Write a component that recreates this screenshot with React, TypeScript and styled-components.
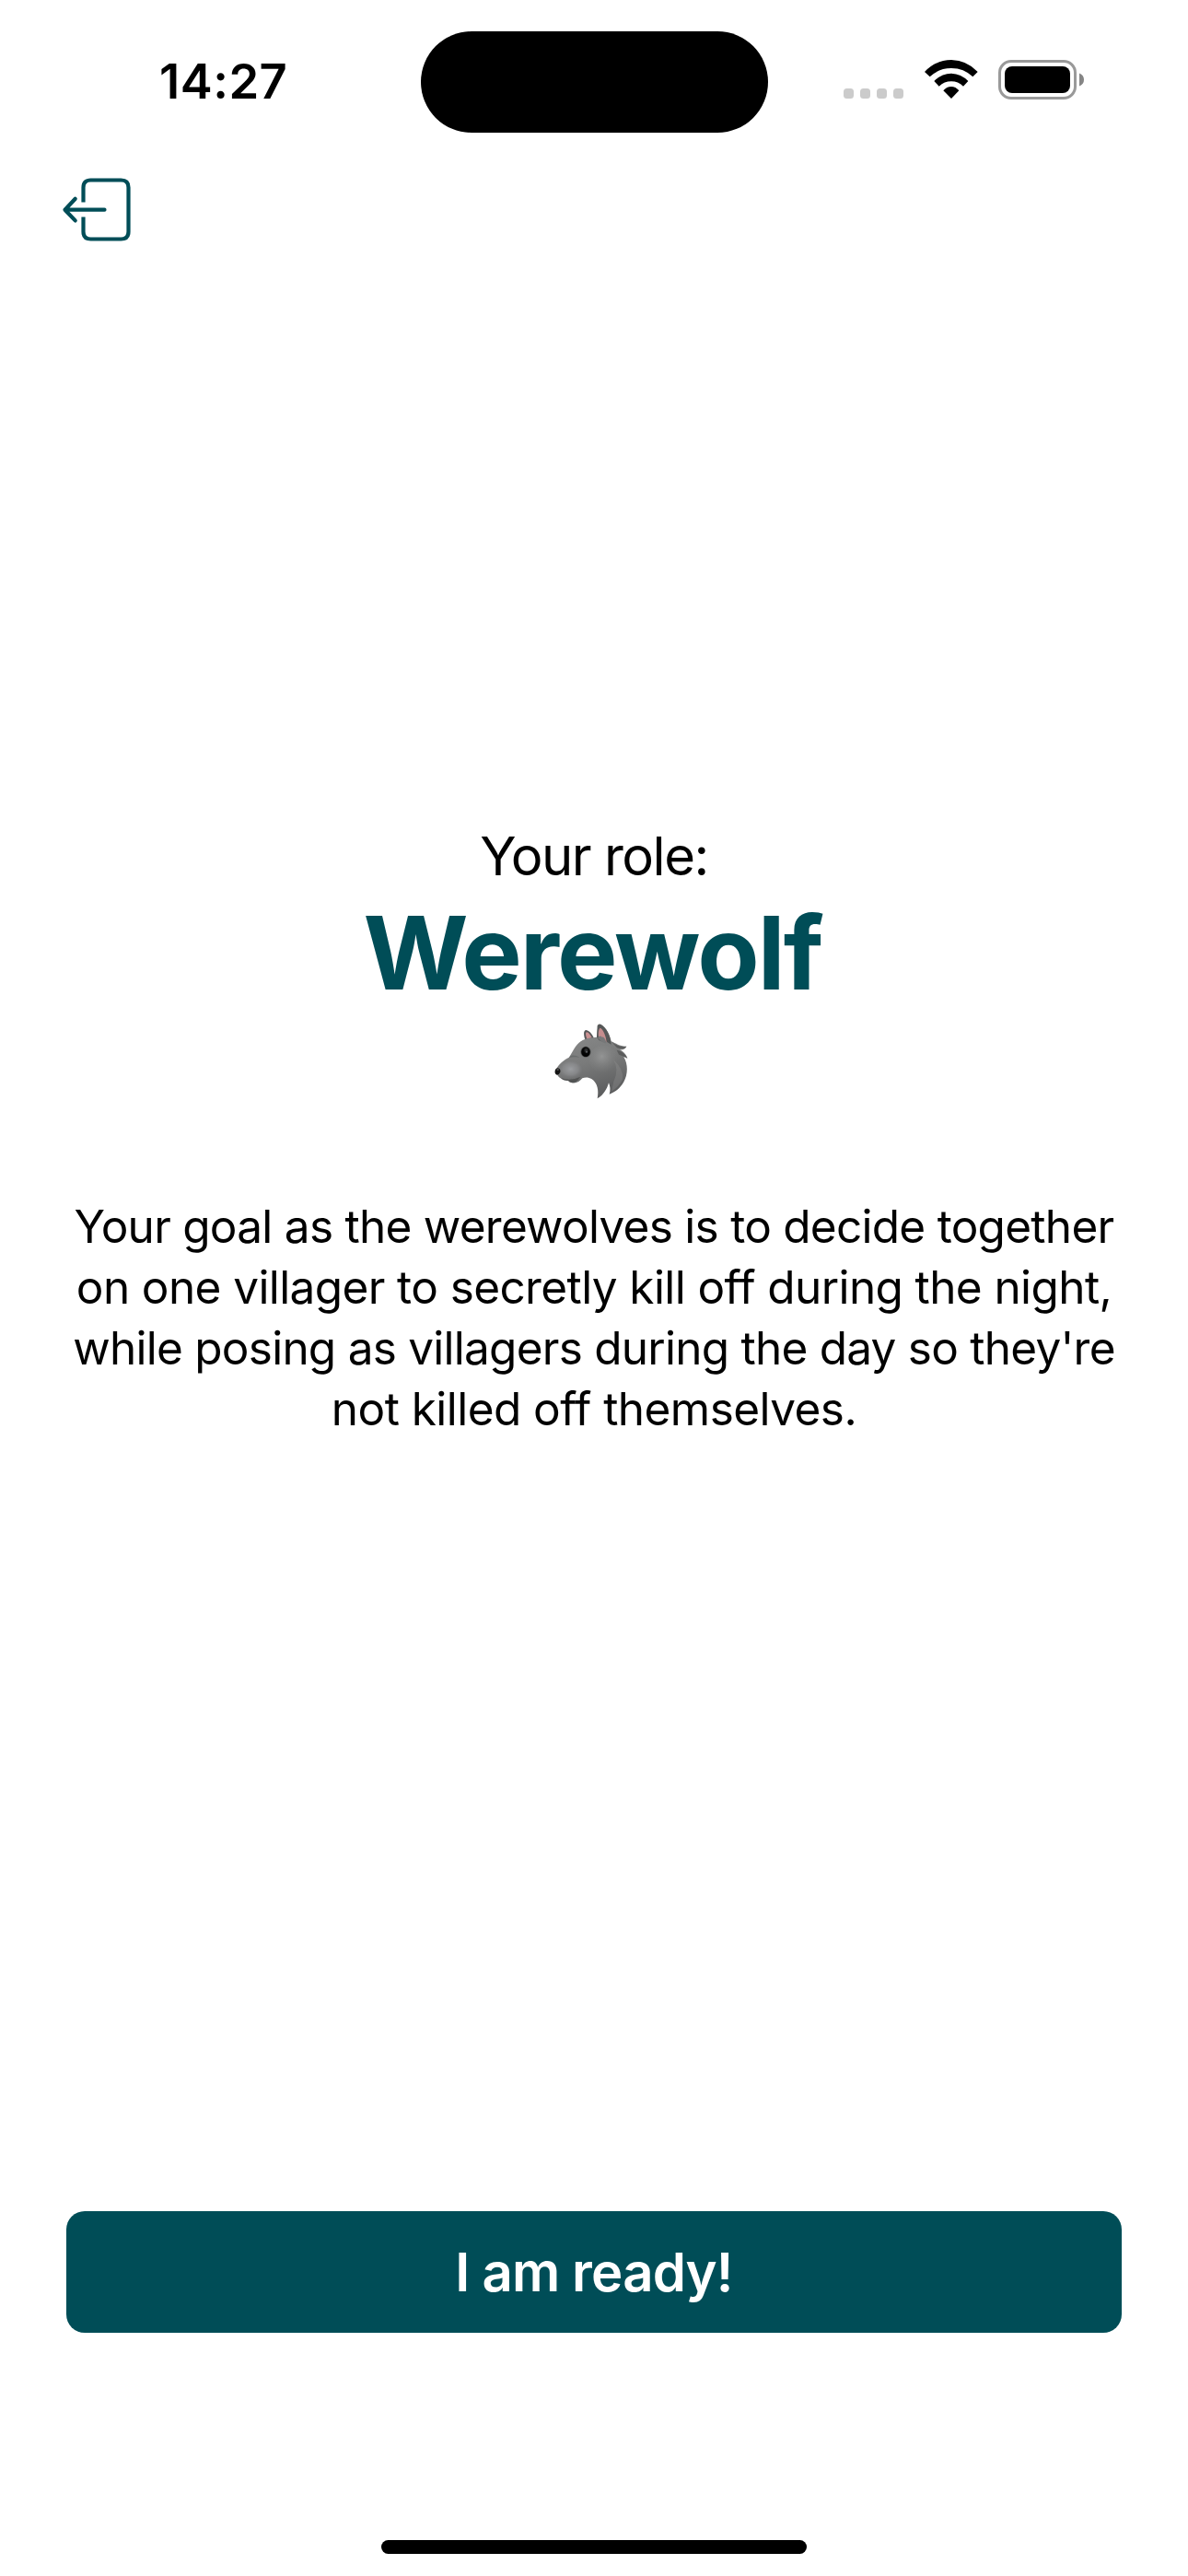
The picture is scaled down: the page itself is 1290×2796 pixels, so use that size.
import React from "react";
import styled, { createGlobalStyle } from "styled-components";

const TEAL = "#004d57";

const GlobalStyle = createGlobalStyle`
  * { box-sizing: border-box; }
  body {
    margin: 0;
    background: #fff;
    color: #000;
    font-family: Inter, "Liberation Sans", sans-serif;
  }
`;

const Screen = styled.div`
  width: 1290px;
  height: 2796px;
  display: flex;
  flex-direction: column;
  overflow: hidden;
  background: #fff;
`;

const StatusBar = styled.header`
  height: 177px;
  display: grid;
  grid-template-columns: 1fr 377px 1fr;
`;

const Clock = styled.time`
  padding: 56px 0 0 173px;
  font-size: 52.5px;
  line-height: 64px;
  font-weight: 600;
  letter-spacing: 0.5px;
  white-space: nowrap;
`;

const Island = styled.div`
  height: 110px;
  margin-top: 34px;
  border-radius: 55px;
  background: #000;
`;

const Indicators = styled.div`
  display: flex;
  align-items: flex-start;
  padding: 65px 0 0 82.5px;
`;

const Signal = styled.div`
  display: flex;
  gap: 7px;
  padding-top: 31px;
  margin-right: 23px;
`;

const SignalDot = styled.span`
  width: 11px;
  height: 11px;
  border-radius: 3.5px;
  background: #cbcbcb;
`;

const WifiIcon = styled.svg`
  width: 58px;
  height: 43px;
  margin-right: 22px;
`;

const BatteryIcon = styled.svg`
  width: 94px;
  height: 43px;
`;

const NavBar = styled.nav`
  display: flex;
  height: 104px;
  padding: 12px 0 0 64px;
`;

const LeaveButton = styled.button`
  width: 84px;
  height: 76px;
  padding: 0;
  border: 0;
  background: none;

  svg {
    display: block;
    width: 84px;
    height: 76px;
  }
`;

const RoleCard = styled.main`
  flex: 1;
  display: flex;
  flex-direction: column;
  align-items: center;
  padding-top: 610px;
  text-align: center;
`;

const Caption = styled.p`
  margin: 0;
  font-size: 58px;
  line-height: 76px;
  letter-spacing: -1.5px;
`;

const RoleName = styled.h1`
  margin: 1px 0 -1px;
  padding-right: 3px;
  font-size: 110px;
  line-height: 133px;
  font-weight: 700;
  letter-spacing: -1.9px;
  color: ${TEAL};
`;

const WolfIcon = styled.svg`
  width: 110px;
  height: 110px;
`;

const Goal = styled.p`
  margin: 88px 0 0;
  font-size: 49.5px;
  line-height: 66px;
  white-space: nowrap;
`;

const GoalLine = styled.span<{ $tracking: number }>`
  display: block;
  letter-spacing: ${({ $tracking }) => $tracking}px;
`;

const Footer = styled.footer`
  display: flex;
  flex-direction: column;
  align-items: center;
  padding: 0 72px 24px;
`;

const ReadyButton = styled.button`
  width: 100%;
  height: 132px;
  padding: 0;
  border: 0;
  border-radius: 20px;
  background: ${TEAL};
  color: #fff;
  font-family: inherit;
  font-size: 58px;
  line-height: 76px;
  font-weight: 600;
  letter-spacing: -0.8px;
`;

const HomeIndicator = styled.div`
  width: 462px;
  height: 15px;
  margin-top: 225px;
  border-radius: 8px;
  background: #000;
`;

const goalLines = [
  { text: "Your goal as the werewolves is to decide together", tracking: -0.73 },
  { text: "on one villager to secretly kill off during the night,", tracking: -0.6 },
  { text: "while posing as villagers during the day so they're", tracking: -0.75 },
  { text: "not killed off themselves.", tracking: -0.55 },
];

function Wifi() {
  return (
    <WifiIcon viewBox="0 0 174 129" aria-hidden="true">
      <path d="M0 39 Q36 1 87 0 Q138 1 173 39 L157 55 Q128 27 87 27 Q46 27 17 55Z" />
      <path d="M31 69 Q54 45 87 44 Q119 45 142 69 L126 86 Q109 70 87 70 Q64 70 47 86Z" />
      <path d="M61 100 Q72 87 87 87 Q101 87 112 100 L87 126Z" />
    </WifiIcon>
  );
}

function Battery() {
  return (
    <BatteryIcon viewBox="0 0 94 43" aria-hidden="true">
      <rect x="1.5" y="1.5" width="82" height="40" rx="12.5" fill="none" stroke="#999" strokeWidth="3" />
      <rect x="7" y="7" width="71" height="29" rx="8" />
      <path d="M88 14.5 Q93 16.5 93 21.5 Q93 26.5 88 28.5Z" fill="#858585" />
    </BatteryIcon>
  );
}

function Leave() {
  return (
    <svg viewBox="0 0 84 76" fill="none" stroke={TEAL} strokeWidth="4.2" aria-hidden="true">
      <path d="M26.5 30.5V14.5Q26.5 6.5 34.5 6.5H67.5Q75.5 6.5 75.5 14.5V62.5Q75.5 70.5 67.5 70.5H34.5Q26.5 70.5 26.5 62.5V46.5" />
      <path d="M49.5 38.7H6.5M17.7 26.7L6.5 38.7L17.7 50.4" strokeLinecap="round" strokeLinejoin="round" />
    </svg>
  );
}

function Wolf() {
  return (
    <WolfIcon viewBox="0 0 330 330" role="img" aria-label="Wolf">
      <defs>
        <linearGradient id="fur" x1="0.3" y1="0" x2="0.6" y2="1">
          <stop offset="0" stopColor="#8a8b8b" />
          <stop offset="0.5" stopColor="#7a7b7b" />
          <stop offset="1" stopColor="#5a5b5c" />
        </linearGradient>
        <radialGradient id="muzzle" cx="0.5" cy="0.45" r="0.55">
          <stop offset="0" stopColor="#9b9da0" />
          <stop offset="0.6" stopColor="#898a8c" stopOpacity="0.8" />
          <stop offset="1" stopColor="#77787a" stopOpacity="0" />
        </radialGradient>
        <radialGradient id="cheek" cx="0.45" cy="0.4" r="0.6">
          <stop offset="0" stopColor="#949595" />
          <stop offset="1" stopColor="#7c7d7d" stopOpacity="0" />
        </radialGradient>
        <radialGradient id="eye" cx="0.55" cy="0.35" r="0.7">
          <stop offset="0" stopColor="#3a3c3d" />
          <stop offset="0.45" stopColor="#050505" />
          <stop offset="1" stopColor="#000" />
        </radialGradient>
      </defs>
      <path d="M137 88C130 68 131 57 138 54C147 54 159 65 165 82Z" fill="#555657" />
      <path d="M142 83C137 70 137 62 141 61C148 62 153 69 158 79Z" fill="#c99091" />
      <path
        d="M39 185C52 163 67 151 84 143C96 124 106 101 122 91C139 79 160 79 174 77L178 40Q181 35 188 37C205 46 218 72 221 91C237 97 249 108 271 107C269 114 260 119 249 118C259 124 269 131 274 146C269 143 266 142 262 142C276 164 276 199 262 223C250 243 237 255 215 263C219 250 218 238 213 226C208 244 197 266 176 277C181 252 177 227 158 214C147 207 136 207 127 211C119 221 108 228 94 226Q85 225 81 219Q65 220 56 211C49 207 46 200 44 197Q38 193 39 185Z"
        fill="url(#fur)"
      />
      <path d="M222 92Q247 112 271 107Q263 119 240 112ZM239 119Q260 122 274 146Q260 139 246 134Z" fill="#5b5c5c" />
      <path d="M174 77L176 40Q180 32 188 36C205 46 219 72 221 101Q205 89 190 91Q178 87 174 77Z" fill="#555757" />
      <path d="M181 81C178 66 179 52 185 47C195 52 204 72 206 94Q193 86 181 81Z" fill="#c58d8e" />
      <path d="M177 80Q184 69 191 77Q199 73 206 96Q197 100 177 80Z" fill="#777879" />
      <ellipse cx="195" cy="149" rx="46" ry="45" fill="url(#cheek)" />
      <path d="M228 150Q248 182 229 222Q225 240 222 254Q246 240 258 214Q262 180 228 150Z" fill="#929393" opacity="0.35" />
      <ellipse cx="89" cy="184" rx="38" ry="29" fill="url(#muzzle)" />
      <path d="M57 210Q87 222 121 206Q107 226 94 226Q85 225 81 219Q66 220 57 210Z" fill="#48494a" opacity="0.75" />
      <path d="M82 145Q99 140 119 143Q101 134 88 138Z" fill="#5e6060" opacity="0.6" />
      <path d="M38 187Q39 179 48 178Q57 181 55 191Q52 199 44 200Q36 197 38 187Z" fill="#141414" />
      <ellipse cx="47" cy="183" rx="4" ry="2.5" fill="#68696a" />
      <ellipse cx="138" cy="125" rx="17" ry="18" fill="#555757" />
      <ellipse cx="138" cy="125" rx="14.5" ry="16" fill="url(#eye)" />
      <circle cx="141" cy="125" r="3" fill="#626668" />
    </WolfIcon>
  );
}

export default function App() {
  return (
    <>
      <GlobalStyle />
      <Screen>
        <StatusBar>
          <Clock>14:27</Clock>
          <Island />
          <Indicators>
            <Signal>
              {[0, 1, 2, 3].map((dot) => (
                <SignalDot key={dot} />
              ))}
            </Signal>
            <Wifi />
            <Battery />
          </Indicators>
        </StatusBar>
        <NavBar>
          <LeaveButton aria-label="Leave game">
            <Leave />
          </LeaveButton>
        </NavBar>
        <RoleCard>
          <Caption>Your role:</Caption>
          <RoleName>Werewolf</RoleName>
          <Wolf />
          <Goal>
            {goalLines.map((line) => (
              <GoalLine key={line.text} $tracking={line.tracking}>
                {line.text}
              </GoalLine>
            ))}
          </Goal>
        </RoleCard>
        <Footer>
          <ReadyButton>I am ready!</ReadyButton>
          <HomeIndicator />
        </Footer>
      </Screen>
    </>
  );
}
